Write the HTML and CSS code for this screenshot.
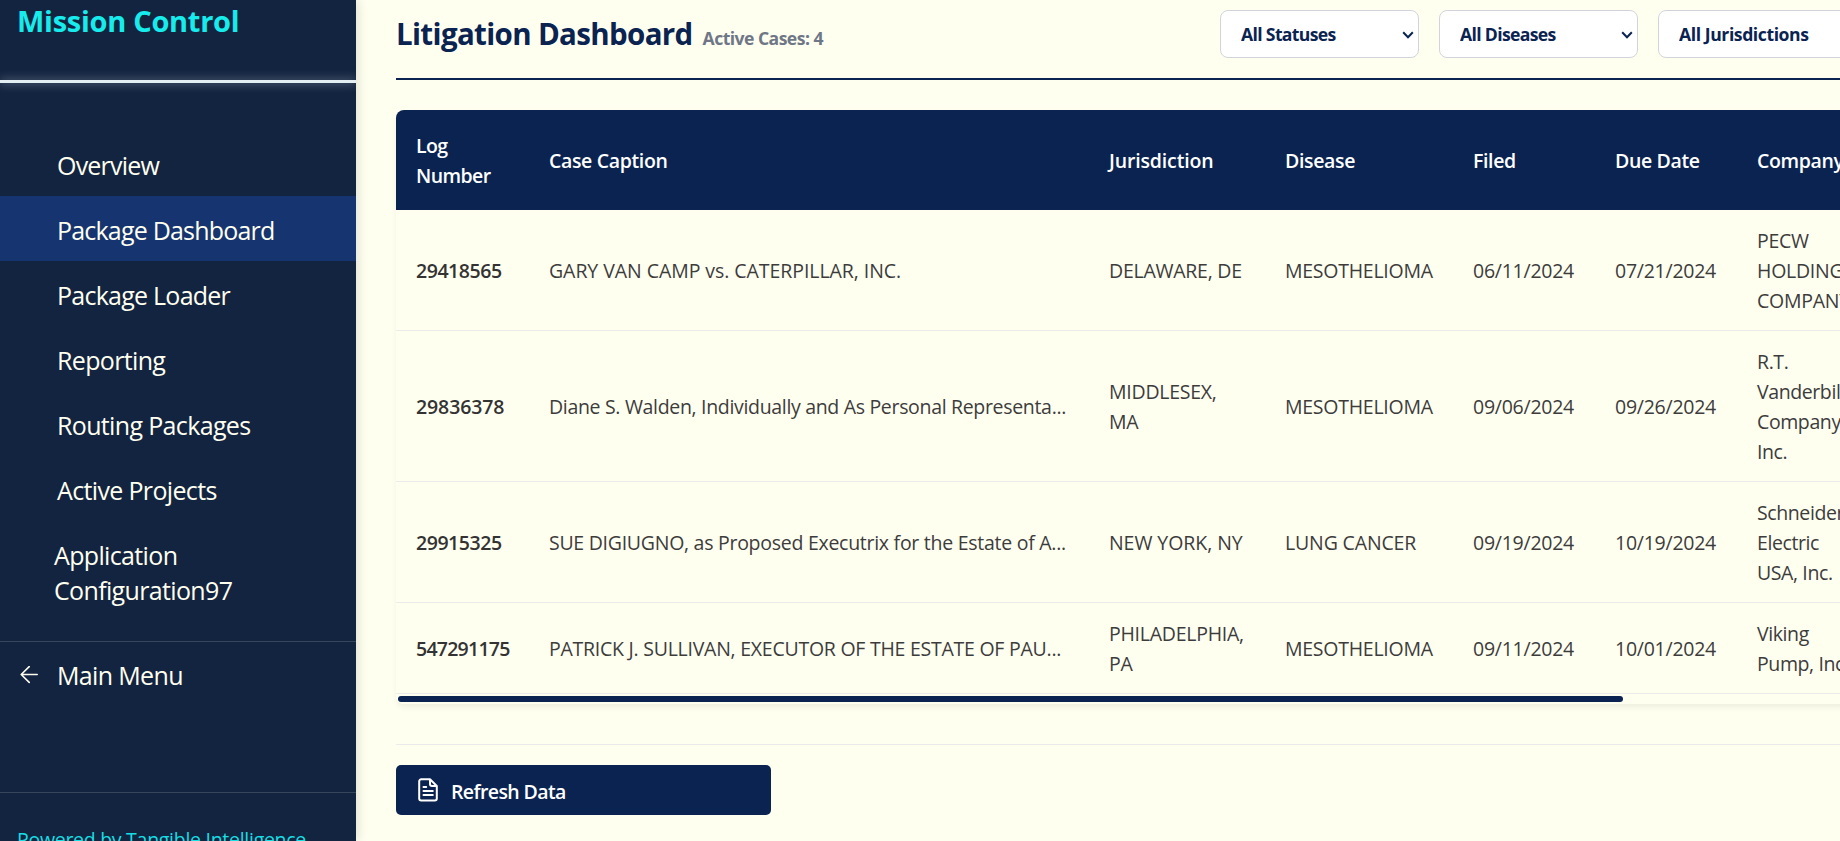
FILE: index.html
```html
<!DOCTYPE html>
<html lang="en">
<head>
<meta charset="utf-8">
<title>Litigation Dashboard</title>
<link rel="stylesheet" href="styles.css">
</head>
<body>
<div class="app">
  <aside class="sidebar">
    <div class="brand">Mission Control</div>
    <div class="brand-line"></div>
    <nav class="nav">
      <a class="nav-item overview">Overview</a>
      <a class="nav-item active">Package Dashboard</a>
      <a class="nav-item loader">Package Loader</a>
      <a class="nav-item">Reporting</a>
      <a class="nav-item">Routing Packages</a>
      <a class="nav-item">Active Projects</a>
      <a class="nav-item nav-config">Application Configuration97</a>
    </nav>
    <div class="menu-back">
      <a class="nav-item nav-back">
        <svg class="back-icon" viewBox="0 0 18 18"><path d="M17.2 8.5H1.2M9.2 .6 1.2 8.5 9.2 16.4"/></svg>
        <span>Main Menu</span>
      </a>
    </div>
    <div class="powered">Powered by Tangible Intelligence</div>
  </aside>
  <main class="main">
    <header class="header">
      <div class="title-group">
        <h1 class="title">Litigation Dashboard</h1>
        <span class="count">Active Cases: 4</span>
      </div>
      <div class="filters">
        <div class="filter-box">
          <select class="filter"><option>All Statuses</option></select>
          <svg class="chevron" viewBox="0 0 12 8"><path d="M1.2 1.2 6 6.2 10.8 1.2"/></svg>
        </div>
        <div class="filter-box">
          <select class="filter"><option>All Diseases</option></select>
          <svg class="chevron" viewBox="0 0 12 8"><path d="M1.2 1.2 6 6.2 10.8 1.2"/></svg>
        </div>
        <div class="filter-box">
          <select class="filter filter-jurisdiction"><option>All Jurisdictions</option></select>
          <svg class="chevron" viewBox="0 0 12 8"><path d="M1.2 1.2 6 6.2 10.8 1.2"/></svg>
        </div>
      </div>
    </header>
    <section class="table-wrap">
      <table class="cases">
        <colgroup><col class="c-log"><col class="c-caption"><col class="c-jur"><col class="c-disease"><col class="c-date"><col class="c-date"><col class="c-company"></colgroup>
        <thead>
          <tr><th class="th-log">Log Number</th><th>Case Caption</th><th class="th-jur">Jurisdiction</th><th>Disease</th><th>Filed</th><th>Due Date</th><th>Company</th></tr>
        </thead>
        <tbody>
          <tr><td class="log">29418565</td><td class="loose">GARY VAN CAMP vs. CATERPILLAR, INC.</td><td>DELAWARE, DE</td><td>MESOTHELIOMA</td><td>06/11/2024</td><td>07/21/2024</td><td>PECW<br>HOLDING<br>COMPANY</td></tr>
          <tr><td class="log log-wide">29836378</td><td class="tight">Diane S. Walden, Individually and As Personal Representa...</td><td>MIDDLESEX,<br>MA</td><td>MESOTHELIOMA</td><td>09/06/2024</td><td>09/26/2024</td><td class="mixed">R.T.<br>Vanderbilt<br>Company,<br>Inc.</td></tr>
          <tr><td class="log">29915325</td><td class="snug">SUE DIGIUGNO, as Proposed Executrix for the Estate of A...</td><td class="loose">NEW YORK, NY</td><td class="lung">LUNG CANCER</td><td>09/19/2024</td><td>10/19/2024</td><td class="mixed">Schneider<br>Electric<br>USA, Inc.</td></tr>
          <tr><td class="log log-tight">547291175</td><td>PATRICK J. SULLIVAN, EXECUTOR OF THE ESTATE OF PAU...</td><td>PHILADELPHIA,<br>PA</td><td>MESOTHELIOMA</td><td>09/11/2024</td><td>10/01/2024</td><td class="mixed">Viking<br>Pump, Inc.</td></tr>
        </tbody>
      </table>
      <div class="scroll-track"><div class="scroll-thumb"></div></div>
    </section>
    <footer class="actions">
      <button class="refresh">
        <svg class="file-icon" viewBox="0 0 20 24"><path d="M12 1.3H3.2A2 2 0 0 0 1.2 3.3V20.5A2 2 0 0 0 3.2 22.5H16.8A2 2 0 0 0 18.8 20.5V8ZM12 1.3V6A2 2 0 0 0 14 8H18.8M5.5 8.9H8.2M5.5 13H14.8M5.5 17H14.8"/></svg>
        <span>Refresh Data</span>
      </button>
    </footer>
  </main>
</div>
</body>
</html>
```
FILE: styles.css
```css
* { box-sizing: border-box; }
body {
  margin: 0;
  height: 841px;
  overflow: hidden;
  background: #fffff0;
  font-family: "Open Sans", "Noto Sans", sans-serif;
}
.app { display: flex; height: 841px; overflow: hidden; }

/* Sidebar */
.sidebar {
  position: relative;
  z-index: 1;
  flex: 0 0 356px;
  display: flex;
  flex-direction: column;
  background: #132440;
  box-shadow: 2px 0 10px rgba(0, 0, 0, .12);
  color: #fffff0;
}
.brand {
  flex: none;
  height: 80px;
  padding: 1px 17px 0;
  font-size: 29px;
  line-height: 40px;
  font-weight: 700;
  letter-spacing: -.28px;
  color: #16ecec;
}
.brand-line {
  flex: none;
  height: 3px;
  background: #e3eef2;
  box-shadow: 0 0 10px rgba(255, 255, 255, .5);
  clip-path: inset(-20px 0);
}
.nav { flex: none; padding-top: 48px; height: 558px; }
.nav-item {
  display: block;
  height: 65px;
  padding: 1px 0 0 57px;
  font-size: 25px;
  line-height: 66px;
  letter-spacing: -.65px;
}
.overview { letter-spacing: -.8px; }
.active { background: #163570; letter-spacing: -.8px; }
.loader { letter-spacing: -.75px; }
.nav-config { height: auto; padding: 17px 100px 0 54px; line-height: 35px; }
.menu-back { flex: none; height: 151px; border-top: 1px solid #38465b; }
.nav-back { display: flex; align-items: center; padding-left: 20px; }
.nav-back span { margin-left: 19px; }
.back-icon {
  width: 18px;
  height: 18px;
  fill: none;
  stroke: #fffff0;
  stroke-width: 1.6;
  stroke-linecap: round;
  stroke-linejoin: round;
}
.powered {
  flex: 1;
  padding: 33px 17px 0;
  border-top: 1px solid #38465b;
  font-size: 19.5px;
  line-height: 27px;
  letter-spacing: -.28px;
  white-space: nowrap;
  color: #16dfe3;
}

/* Main */
.main { flex: 1; min-width: 0; padding-left: 40px; overflow: hidden; }
.header {
  display: flex;
  justify-content: space-between;
  align-items: flex-start;
  width: 1461px;
  height: 80px;
  padding-top: 10px;
  border-bottom: 2px solid #0a2351;
}
.title-group { display: flex; align-items: baseline; gap: 10px; }
.title {
  margin: 0;
  font-size: 29.5px;
  line-height: 48px;
  font-weight: 700;
  letter-spacing: -.65px;
  color: #0a2351;
}
.count { font-size: 17.6px; font-weight: 700; letter-spacing: -.55px; color: #6f7787; }
.filters { display: flex; gap: 20px; }
.filter-box { position: relative; width: 199px; height: 48px; }
.filter {
  appearance: none;
  width: 100%;
  height: 100%;
  padding: 0 0 0 20px;
  border: 1px solid #d1d5db;
  border-radius: 8px;
  background: #fff;
  font-family: inherit;
  font-size: 17.6px;
  font-weight: 700;
  letter-spacing: -.65px;
  color: #0a2351;
}
.filter-jurisdiction { letter-spacing: -.42px; }
.chevron {
  position: absolute;
  right: 5px;
  top: 21px;
  width: 12px;
  height: 8px;
  fill: none;
  stroke: #0a2351;
  stroke-width: 2;
  pointer-events: none;
}

/* Cases table */
.table-wrap {
  width: 1860px;
  margin-top: 30px;
  border-radius: 8px;
  overflow: hidden;
  box-shadow: 0 4px 6px -1px rgba(0, 0, 0, .07);
}
.cases {
  width: 1860px;
  table-layout: fixed;
  border-collapse: separate;
  border-spacing: 0;
  font-size: 19.5px;
  line-height: 30px;
  letter-spacing: -.25px;
  color: #3c3c3c;
}
.c-log { width: 133px; }
.c-caption { width: 560px; }
.c-jur { width: 176px; }
.c-disease { width: 188px; }
.c-date { width: 142px; }
.cases th {
  height: 100px;
  padding: 21px 20px 19px;
  background: #0a2351;
  color: #fff;
  font-weight: 600;
  letter-spacing: -.35px;
  text-align: left;
}
.cases .th-log { letter-spacing: -.6px; }
.cases .th-jur { letter-spacing: -.15px; }
.cases td { padding: 16px 20px 14px; border-bottom: 1px solid #ebebeb; white-space: nowrap; }
.cases .log { font-weight: 600; color: #333; letter-spacing: -.45px; }
.cases .log-wide { letter-spacing: -.1px; }
.cases .log-tight { letter-spacing: -.75px; }
.loose { letter-spacing: -.06px; }
.lung { letter-spacing: -.15px; }
.snug { letter-spacing: -.27px; }
.tight { letter-spacing: -.32px; }
.mixed { letter-spacing: -.4px; }
.scroll-track { height: 10px; padding: 2px; background: #fffff0; }
.scroll-thumb { width: 1225px; height: 6px; border-radius: 3px; background: #0a2351; }

/* Actions */
.actions { margin-top: 40px; padding-top: 20px; border-top: 1px solid #ebebee; }
.refresh {
  display: flex;
  align-items: center;
  width: 375px;
  height: 50px;
  padding: 0 22px;
  border: 0;
  border-radius: 5px;
  background: #0a2351;
  color: #fff;
  font-family: inherit;
  font-size: 19.5px;
  font-weight: 600;
  letter-spacing: -.6px;
}
.refresh span { margin-left: 13px; padding-top: 2px; }
.file-icon {
  width: 20px;
  height: 24px;
  fill: none;
  stroke: #fff;
  stroke-width: 2;
  stroke-linecap: round;
  stroke-linejoin: round;
}
```
